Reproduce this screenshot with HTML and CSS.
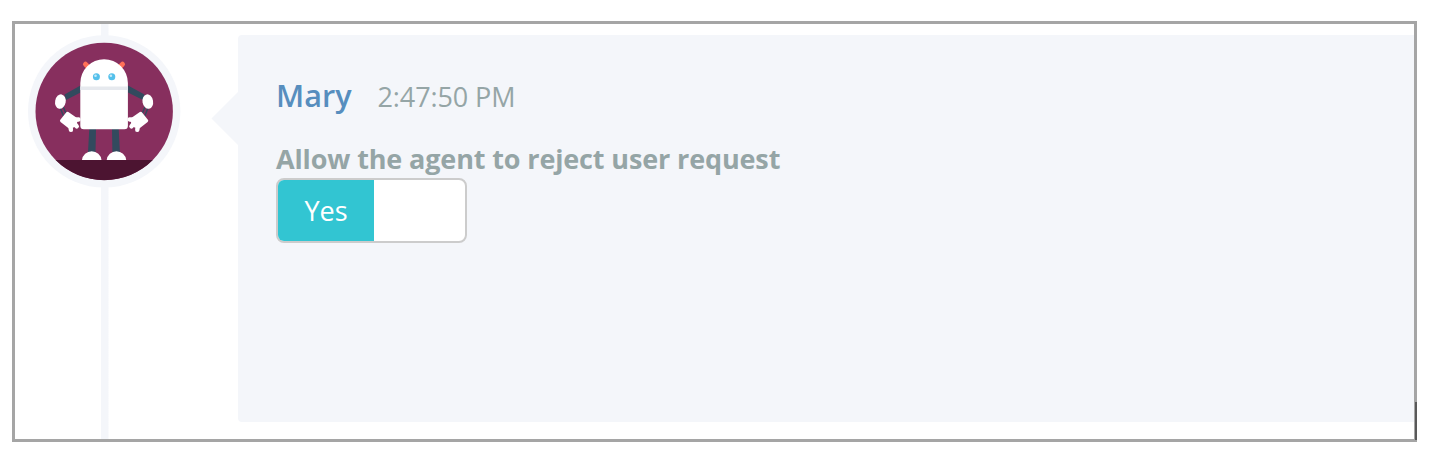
FILE: index.html
```html
<!DOCTYPE html>
<html lang="en">
<head>
<meta charset="utf-8">
<title>Timeline</title>
<link rel="stylesheet" href="styles.css">
</head>
<body>
<main class="frame">
  <div class="rail">
    <svg class="avatar" viewBox="27 34 154 154" aria-hidden="true">
      <circle cx="104.2" cy="111.4" r="76.2" fill="#f4f6fa"/>
      <circle cx="104.2" cy="111.4" r="68.7" fill="#872f5e"/>
      <path d="M55.600 160A68.700 68.700 0 0 0 152.800 160z" fill="#4c1431"/>
      <path d="M85.500 64.200l3.500 3.500M122.500 64.200l-3.500 3.500" stroke="#ff7058" stroke-width="5" stroke-linecap="round"/>
      <path d="M80.5 85.5L64.5 94.5l1.500 5.500 14.500-7.500zM128 85.500l16.500 9-1.500 5.500-15-7.500z" fill="#324a5e"/>
      <path d="M60.300 108l3.200 8M63.300 107l3.400 8M148 108l-3.200 8M145 107l-3.400 8" stroke="#324a5e" stroke-width="1.500"/>
      <ellipse cx="60.400" cy="101.600" rx="5.300" ry="7.300" transform="rotate(10 60.400 101.600)" fill="#fff"/>
      <ellipse cx="147.800" cy="101.600" rx="5.300" ry="7.300" transform="rotate(-10 147.800 101.600)" fill="#fff"/>
      <g fill="#fff" stroke="#fff" stroke-linecap="round" stroke-linejoin="round">
        <path stroke-width="3" d="M67.500 113.300L61.500 120.800 69.500 127.200 74.500 125.500 76.500 119.500z"/>
        <path stroke-width="4.400" d="M74 119.800l4.500-.3M74.500 123.500l2.300 2.800M70.500 126l.4 3.900"/>
        <path stroke-width="3" d="M140.700 113.300l6 7.500-8 6.400-5-1.700-2-6z"/>
        <path stroke-width="4.400" d="M134.200 119.800l-4.500-.3M133.700 123.500l-2.300 2.800M137.700 126l-.4 3.900"/>
      </g>
      <path d="M89.300 129h6.700l-.5 23h-7.500zM112 129h6.700l1.200 23h-7.500z" fill="#324a5e"/>
      <path d="M82 160a9.800 9.800 0 0 1 19.500 0zM106.700 160a9.800 9.800 0 0 1 19.500 0z" fill="#fff"/>
      <path d="M80.300 83a23.800 23.800 0 0 1 47.600 0v42.700a3.500 3.500 0 0 1-3.500 3.500H83.800a3.500 3.500 0 0 1-3.500-3.500z" fill="#fff"/>
      <rect x="80.300" y="86.500" width="47.600" height="3.500" fill="#e6e9ee"/>
      <circle cx="96.400" cy="76.800" r="3.500" fill="#54c0eb"/>
      <circle cx="111.800" cy="76.800" r="3.500" fill="#54c0eb"/>
      <circle cx="95.500" cy="75.800" r="1.300" fill="#c5e9f8"/>
      <circle cx="110.900" cy="75.800" r="1.300" fill="#c5e9f8"/>
    </svg>
  </div>
  <svg class="pointer" viewBox="0 0 27 54" aria-hidden="true"><path d="M27 0L.5 26.500 27 53z" fill="#f4f6fa"/></svg>
  <section class="panel">
    <header class="heading"><span class="name">Mary</span><time class="time">2:47:50 PM</time></header>
    <div class="label">Allow the agent to reject user request</div>
    <div class="switch"><span class="switch-on">Yes</span></div>
  </section>
  <span class="scroll-edge"></span>
</main>
</body>
</html>
```
FILE: styles.css
```css
* { box-sizing: border-box; }
body {
  margin: 0;
  padding: 21px 0 0 12px;
  background: #fff;
  font-family: "Open Sans", "Noto Sans", sans-serif;
}
.frame {
  position: relative;
  display: flex;
  width: 1405px;
  height: 421px;
  border: 3px solid #a5a5a5;
}
.rail {
  width: 196px;
  flex: none;
  padding: 10px 0 0 12px;
  background: linear-gradient(#f4f6fa, #f4f6fa) 86px 0 / 7.500px 100% no-repeat;
}
.avatar { display: block; width: 154px; height: 154px; }
.pointer { width: 27px; height: 54px; margin-top: 68px; flex: none; }
.panel {
  flex: 1;
  height: 387px;
  margin-top: 11px;
  padding: 38px;
  background: #f4f6fa;
  border-radius: 4px 0 0 4px;
}
.heading {
  display: flex;
  align-items: baseline;
  gap: 26px;
  height: 66px;
  line-height: 45px;
}
.name { font-size: 30.600px; font-weight: 600; color: #578ebe; }
.time { font-size: 27px; letter-spacing: -0.1px; color: #95a5a6; }
.label {
  height: 39px;
  font-size: 27px;
  font-weight: 700;
  letter-spacing: -0.135px;
  line-height: 40px;
  color: #95a5a6;
  white-space: nowrap;
}
.switch {
  width: 191px;
  height: 65px;
  border: 2px solid #ccc;
  border-radius: 8px;
  background: #fff;
  overflow: hidden;
}
.switch-on {
  display: block;
  width: 96px;
  height: 61px;
  background: #32c5d2;
  color: #fff;
  font-size: 27px;
  line-height: 62px;
  text-align: center;
}
.scroll-edge {
  position: absolute;
  right: -3px;
  bottom: -1px;
  width: 2px;
  height: 38px;
  background: #595959;
}
```
